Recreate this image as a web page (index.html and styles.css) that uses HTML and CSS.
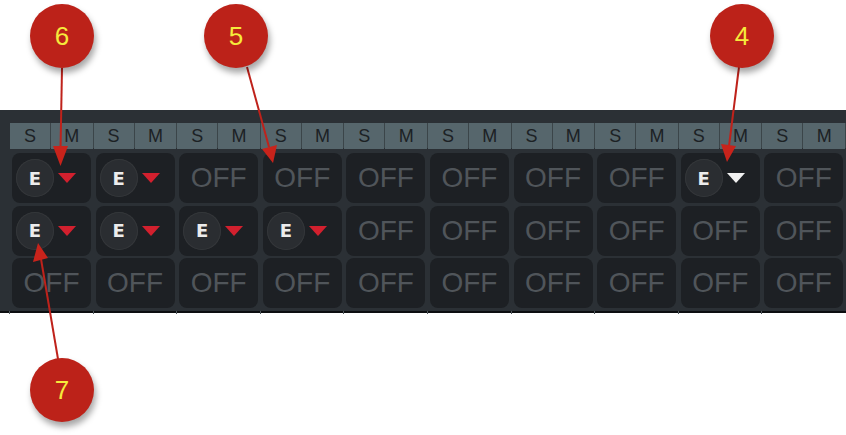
FILE: index.html
```html
<!DOCTYPE html>
<html>
<head>
<meta charset="utf-8">
<link rel="stylesheet" href="styles.css">
</head>
<body>
<div class="page">
  <div class="panel">
    <div class="grid">
      <div class="col">
        <div class="strip"><span>S</span><span>M</span></div>
        <div class="btn"><span class="e">E</span><span class="tri red"></span></div>
        <div class="btn"><span class="e">E</span><span class="tri red"></span></div>
        <div class="btn off">OFF</div>
        <div class="foot"></div>
      </div>
      <div class="col">
        <div class="strip"><span>S</span><span>M</span></div>
        <div class="btn"><span class="e">E</span><span class="tri red"></span></div>
        <div class="btn"><span class="e">E</span><span class="tri red"></span></div>
        <div class="btn off">OFF</div>
        <div class="foot"></div>
      </div>
      <div class="col">
        <div class="strip"><span>S</span><span>M</span></div>
        <div class="btn off">OFF</div>
        <div class="btn"><span class="e">E</span><span class="tri red"></span></div>
        <div class="btn off">OFF</div>
        <div class="foot"></div>
      </div>
      <div class="col">
        <div class="strip"><span>S</span><span>M</span></div>
        <div class="btn off">OFF</div>
        <div class="btn"><span class="e">E</span><span class="tri red"></span></div>
        <div class="btn off">OFF</div>
        <div class="foot"></div>
      </div>
      <div class="col">
        <div class="strip"><span>S</span><span>M</span></div>
        <div class="btn off">OFF</div>
        <div class="btn off">OFF</div>
        <div class="btn off">OFF</div>
        <div class="foot"></div>
      </div>
      <div class="col">
        <div class="strip"><span>S</span><span>M</span></div>
        <div class="btn off">OFF</div>
        <div class="btn off">OFF</div>
        <div class="btn off">OFF</div>
        <div class="foot"></div>
      </div>
      <div class="col">
        <div class="strip"><span>S</span><span>M</span></div>
        <div class="btn off">OFF</div>
        <div class="btn off">OFF</div>
        <div class="btn off">OFF</div>
        <div class="foot"></div>
      </div>
      <div class="col">
        <div class="strip"><span>S</span><span>M</span></div>
        <div class="btn off">OFF</div>
        <div class="btn off">OFF</div>
        <div class="btn off">OFF</div>
        <div class="foot"></div>
      </div>
      <div class="col">
        <div class="strip"><span>S</span><span>M</span></div>
        <div class="btn"><span class="e">E</span><span class="tri white"></span></div>
        <div class="btn off">OFF</div>
        <div class="btn off">OFF</div>
        <div class="foot"></div>
      </div>
      <div class="col">
        <div class="strip"><span>S</span><span>M</span></div>
        <div class="btn off">OFF</div>
        <div class="btn off">OFF</div>
        <div class="btn off">OFF</div>
        <div class="foot"></div>
      </div>
    </div>
  </div>

  <svg class="arrows" width="846" height="435" viewBox="0 0 846 435">
    <g stroke="#bf221b" stroke-width="2" fill="none">
      <line x1="62" y1="68" x2="60.5" y2="150"/>
      <line x1="247" y1="67" x2="269" y2="147"/>
      <line x1="739" y1="67" x2="729" y2="146"/>
      <line x1="58" y1="359" x2="41" y2="259"/>
    </g>
    <g fill="#c8231b">
      <polygon points="53,146 68,146 60.5,166"/>
      <polygon points="262,149 277,145 273,163"/>
      <polygon points="721,144 736,146 727,162"/>
      <polygon points="33,262 48,258 38,243"/>
    </g>
  </svg>

  <div class="badge b6">6</div>
  <div class="badge b5">5</div>
  <div class="badge b4">4</div>
  <div class="badge b7">7</div>
</div>
</body>
</html>
```

FILE: styles.css
```css
html, body {
  margin: 0;
  padding: 0;
  background: #ffffff;
}

.page {
  position: relative;
  width: 846px;
  height: 435px;
  overflow: hidden;
  padding-top: 110px;
  box-sizing: border-box;
}

.panel {
  background: #2b3035;
  height: 203px;
  padding: 13px 0 0 10px;
  box-sizing: border-box;
  border-bottom: 2px solid #0c0e10;
}

.grid {
  display: grid;
  grid-template-columns: repeat(10, 83.6px);
  height: 100%;
}

.col {
  display: flex;
  flex-direction: column;
  gap: 2.5px;
}

.strip {
  display: grid;
  grid-template-columns: 40px 1fr;
  gap: 1px;
  height: 25px;
  background: #3b4549;
  padding-right: 1px;
  margin-bottom: 2.5px;
}

.strip span {
  background: #56666c;
  color: #1c2124;
  font-family: "Liberation Sans", Arial, sans-serif;
  font-size: 18px;
  line-height: 26px;
  text-align: center;
}

.btn {
  margin-left: 2px;
  width: 79px;
  height: 50px;
  flex: none;
  border-radius: 8px;
  background: #1d2024;
  display: flex;
  align-items: center;
  box-sizing: border-box;
  padding-left: 4px;
  gap: 4px;
}

.btn.off {
  justify-content: center;
  padding-left: 0;
  font-family: "Liberation Sans", Arial, sans-serif;
  font-size: 28px;
  color: #50555a;
}

.e {
  width: 38px;
  height: 38px;
  border-radius: 50%;
  background: #2a2d31;
  box-shadow: inset 0 0 0 1px #34373a;
  display: flex;
  align-items: center;
  justify-content: center;
  font-family: "DejaVu Sans", "Liberation Sans", sans-serif;
  font-weight: bold;
  font-size: 18px;
  color: #ececec;
}

.tri {
  width: 0;
  height: 0;
  border-left: 9.5px solid transparent;
  border-right: 9.5px solid transparent;
  border-top: 10px solid #d2202e;
}

.tri.white {
  border-top-color: #f0f0f0;
}

.foot {
  flex: 1;
  margin-left: -1px;
  margin-bottom: -3px;
  border-left: 1px solid #4f575c;
}

.arrows {
  position: absolute;
  left: 0;
  top: 0;
}

.badge {
  position: absolute;
  width: 64px;
  height: 64px;
  border-radius: 50%;
  background: #bc2219;
  color: #f6ea3c;
  font-family: "Liberation Sans", Arial, sans-serif;
  font-size: 26px;
  display: flex;
  align-items: center;
  justify-content: center;
  box-shadow: 2px 5px 6px rgba(0, 0, 0, 0.35);
}

.b6 { left: 30px; top: 4px; }
.b5 { left: 204px; top: 4px; }
.b4 { left: 710px; top: 4px; }
.b7 { left: 30px; top: 358px; }
```
